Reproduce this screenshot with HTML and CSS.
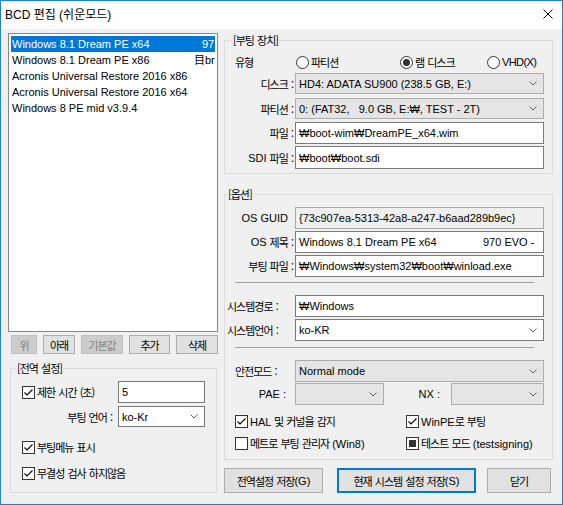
FILE: index.html
```html
<!DOCTYPE html>
<html lang="ko">
<head>
<meta charset="utf-8">
<title>BCD 편집 (쉬운모드)</title>
<link rel="stylesheet" href="styles.css">
</head>
<body>
<div class="window">
  <div class="titlebar">
    <span class="title">BCD <span class="kt">편집</span> (<span class="kt">쉬운모드</span>)</span>
    <span class="close"><svg width="10" height="10" viewBox="0 0 10 10"><path d="M0.5 0.5L9.5 9.5M9.5 0.5L0.5 9.5" stroke="#000" stroke-width="1" fill="none"/></svg></span>
  </div>
  <div class="client">
    <div class="left">
      <div class="listbox">
        <div class="item sel"><span class="c1">Windows 8.1 Dream PE x64</span>97</div>
        <div class="item"><span class="c1 c1-b">Windows 8.1 Dream PE x86</span>目br</div>
        <div class="item">Acronis Universal Restore 2016 x86</div>
        <div class="item">Acronis Universal Restore 2016 x64</div>
        <div class="item">Windows 8 PE mid v3.9.4</div>
      </div>
      <div class="btnrow">
        <button class="btn dis bw-up"><span class="k">위</span></button>
        <button class="btn bw-down"><span class="k">아래</span></button>
        <button class="btn dis bw-def"><span class="k">기본값</span></button>
        <button class="btn bw-add"><span class="k">추가</span></button>
        <button class="btn bw-del"><span class="k">삭제</span></button>
      </div>
      <fieldset class="group g-global">
        <legend class="k">[전역 설정]</legend>
        <div class="grow">
          <span class="check gcheck"><span class="cb"><svg width="11" height="11" viewBox="0 0 11 11"><path d="M1.5 5.5L4 8L9.5 2.5" fill="none" stroke="#000" stroke-width="1.1"/></svg></span><span class="k">제한 시간 (초)</span></span>
          <div class="field gfield h22">5</div>
        </div>
        <div class="grow2 mt3">
          <span class="glbl k">부팅 언어 :</span>
          <div class="field combo gfield h21"><span class="val">ko-Kr</span><svg class="arrow" width="8" height="5" viewBox="0 0 8 5"><path d="M0.5 0.5L4 4L7.5 0.5" fill="none" stroke="#606060"/></svg></div>
        </div>
        <div class="cbrow gpad mt12">
          <span class="check"><span class="cb"><svg width="11" height="11" viewBox="0 0 11 11"><path d="M1.5 5.5L4 8L9.5 2.5" fill="none" stroke="#000" stroke-width="1.1"/></svg></span><span class="k">부팅메뉴 표시</span></span>
        </div>
        <div class="cbrow gpad mt10">
          <span class="check"><span class="cb"><svg width="11" height="11" viewBox="0 0 11 11"><path d="M1.5 5.5L4 8L9.5 2.5" fill="none" stroke="#000" stroke-width="1.1"/></svg></span><span class="k">무결성 검사 하지않음</span></span>
        </div>
      </fieldset>
    </div>

    <div class="right">
      <fieldset class="group g-boot">
        <legend class="k">[부팅 장치]</legend>
        <div class="typerow">
          <span class="typelbl k">유형</span>
          <span class="radio r1"><span class="rb"></span><span class="k">파티션</span></span>
          <span class="radio r2"><span class="rb on"></span><span class="k">램 디스크</span></span>
          <span class="radio"><span class="rb"></span><span class="vhd">VHD(X)</span></span>
        </div>
        <div class="row h21 mt2">
          <span class="lbl k">디스크 :</span>
          <div class="field combo gray"><span class="val">HD4: ADATA SU900 (238.5 GB, E:)</span><svg class="arrow" width="8" height="5" viewBox="0 0 8 5"><path d="M0.5 0.5L4 4L7.5 0.5" fill="none" stroke="#606060"/></svg></div>
        </div>
        <div class="row h21 mt4">
          <span class="lbl k">파티션 :</span>
          <div class="field combo gray"><span class="val">0: (FAT32,   9.0 GB, E:₩, TEST - 2T)</span><svg class="arrow" width="8" height="5" viewBox="0 0 8 5"><path d="M0.5 0.5L4 4L7.5 0.5" fill="none" stroke="#606060"/></svg></div>
        </div>
        <div class="row h22 mt3">
          <span class="lbl k">파일 :</span>
          <div class="field">₩boot-wim₩DreamPE_x64.wim</div>
        </div>
        <div class="row h23 mt2">
          <span class="lbl">SDI <span class="k">파일 :</span></span>
          <div class="field">₩boot₩boot.sdi</div>
        </div>
      </fieldset>

      <fieldset class="group g-opt">
        <legend class="k">[옵션]</legend>
        <div class="row h22">
          <span class="lbl lbl-guid">OS GUID</span>
          <div class="field ro">{73c907ea-5313-42a8-a247-b6aad289b9ec}</div>
        </div>
        <div class="row h22 mt2">
          <span class="lbl">OS <span class="k">제목 :</span></span>
          <div class="field"><span class="tab">Windows 8.1 Dream PE x64</span><span class="rest">970 EVO -</span></div>
        </div>
        <div class="row h22 mt2">
          <span class="lbl k">부팅 파일 :</span>
          <div class="field">₩Windows₩system32₩boot₩winload.exe</div>
        </div>
        <div class="sep sep1"></div>
        <div class="row h22 mt12">
          <span class="lbl lbl-sys k">시스템경로 :</span>
          <div class="field">₩Windows</div>
        </div>
        <div class="row h22 mt2">
          <span class="lbl lbl-sys k">시스템언어 :</span>
          <div class="field combo"><span class="val">ko-KR</span><svg class="arrow" width="8" height="5" viewBox="0 0 8 5"><path d="M0.5 0.5L4 4L7.5 0.5" fill="none" stroke="#606060"/></svg></div>
        </div>
        <div class="sep sep2"></div>
        <div class="row h22 mt12">
          <span class="lbl lbl-safe k">안전모드 :</span>
          <div class="field combo gray"><span class="val">Normal mode</span><svg class="arrow" width="8" height="5" viewBox="0 0 8 5"><path d="M0.5 0.5L4 4L7.5 0.5" fill="none" stroke="#606060"/></svg></div>
        </div>
        <div class="row h22 mt1">
          <span class="lbl lbl-pae">PAE :</span>
          <div class="field combo gray f-pae"><span class="val"></span><svg class="arrow" width="8" height="5" viewBox="0 0 8 5"><path d="M0.5 0.5L4 4L7.5 0.5" fill="none" stroke="#606060"/></svg></div>
          <span class="lbl lbl-nx">NX :</span>
          <div class="field combo gray f-nx"><span class="val"></span><svg class="arrow" width="8" height="5" viewBox="0 0 8 5"><path d="M0.5 0.5L4 4L7.5 0.5" fill="none" stroke="#606060"/></svg></div>
        </div>
        <div class="cbrow opad mt8">
          <span class="check ocol"><span class="cb"><svg width="11" height="11" viewBox="0 0 11 11"><path d="M1.5 5.5L4 8L9.5 2.5" fill="none" stroke="#000" stroke-width="1.1"/></svg></span><span>HAL <span class="k">및 커널을 감지</span></span></span>
          <span class="check"><span class="cb"><svg width="11" height="11" viewBox="0 0 11 11"><path d="M1.5 5.5L4 8L9.5 2.5" fill="none" stroke="#000" stroke-width="1.1"/></svg></span><span>WinPE<span class="k">로 부팅</span></span></span>
        </div>
        <div class="cbrow opad mt6">
          <span class="check ocol"><span class="cb"></span><span><span class="k">메트로 부팅 관리자</span> (Win8)</span></span>
          <span class="check"><span class="cb mixed"></span><span><span class="k">테스트 모드</span> (testsigning)</span></span>
        </div>
      </fieldset>

      <div class="actions">
        <button class="btn act act-g"><span class="k">전역설정 저장</span>(G)</button>
        <button class="btn act act-s default"><span class="k">현재 시스템 설정 저장</span>(S)</button>
        <button class="btn act act-c"><span class="k">닫기</span></button>
      </div>
    </div>
  </div>
</div>
</body>
</html>
```

FILE: styles.css
```css
* { box-sizing: border-box; }
html, body { margin: 0; padding: 0; }
body {
  font-family: "Liberation Sans", "Noto Sans CJK KR", sans-serif;
  font-size: 11px;
  color: #000;
  background: #fff;
}
.k { font-family: "Noto Sans CJK KR", sans-serif; font-size: 11px; letter-spacing: -1px; word-spacing: 1px; }
.kt { font-family: "Noto Sans CJK KR", sans-serif; }

.window {
  width: 563px;
  height: 505px;
  border: 1px solid #1883d7;
  background: #f0f0f0;
  display: flex;
  flex-direction: column;
}
.titlebar {
  height: 28px;
  flex: none;
  background: #fff;
  display: flex;
  align-items: center;
  justify-content: space-between;
  padding: 0 9px 3px 4px;
}
.title { font-size: 12px; }
.close svg { display: block; }

.client { display: flex; gap: 6px; padding-left: 7px; }
.left { width: 210px; display: flex; flex-direction: column; }
.right { width: 329px; display: flex; flex-direction: column; }

/* list */
.listbox {
  margin-top: 4px;
  height: 299px;
  background: #fff;
  border: 1px solid #828790;
  padding: 2px;
  overflow: hidden;
}
.item { height: 16px; line-height: 16px; padding-left: 1px; white-space: nowrap; overflow: hidden; }
.item.sel { background: #0078d7; color: #fff; }
.c1 { display: inline-block; width: 190px; }
.c1-b { width: 182px; }

/* buttons */
.btnrow { display: flex; gap: 6px; margin-top: 3px; padding-left: 3px; }
.btn {
  height: 19px;
  border: 1px solid #adadad;
  background: #e1e1e1;
  font: inherit;
  color: #000;
  padding: 0;
  margin: 0;
  display: flex;
  align-items: center;
  justify-content: center;
  white-space: nowrap;
}
.btn.dis { background: #cccccc; border-color: #bfbfbf; color: #838383; }
.bw-up { width: 26px; }
.bw-down { width: 32px; }
.bw-def { width: 42px; }
.bw-add { width: 41px; }
.bw-del { width: 42px; }

/* group boxes */
.group {
  margin: 0;
  border: 1px solid #dcdcdc;
  padding: 5px 0 4px 0;
  min-width: 0;
}
.group legend { padding: 0 1px; line-height: 16px; }
.g-boot { margin-top: 3px; }
.g-boot legend { margin-left: 7px; }
.g-opt { margin-top: 12px; padding-bottom: 8px; }
.g-opt legend { margin-left: 2px; }
.g-global { margin: 6px 1px 0 2px; padding-bottom: 11px; }
.g-global legend { margin-left: 5px; }

.mt1 { margin-top: 1px; }
.mt2 { margin-top: 2px; }
.mt3 { margin-top: 3px; }
.mt4 { margin-top: 4px; }
.mt6 { margin-top: 6px; }
.mt8 { margin-top: 8px; }
.mt10 { margin-top: 10px; }
.mt12 { margin-top: 12px; }
.h21 { height: 21px; }
.h22 { height: 22px; }
.h23 { height: 23px; }

/* rows */
.typerow { display: flex; align-items: center; height: 18px; padding-left: 10px; }
.typelbl { width: 61px; }
.radio { display: flex; align-items: center; gap: 2px; }
.r1 { width: 104px; }
.r2 { width: 87px; }
.rb {
  width: 13px; height: 13px;
  border: 1px solid #333;
  border-radius: 50%;
  background: #fff;
  display: flex; align-items: center; justify-content: center;
  flex: none;
}
.rb.on::after { content: ""; width: 7px; height: 7px; border-radius: 50%; background: #333; }
.vhd { letter-spacing: -0.6px; }

.row { display: flex; }
.lbl {
  width: 70px;
  flex: none;
  display: flex;
  align-items: center;
  justify-content: flex-end;
  padding-right: 2px;
  white-space: pre;
}
.lbl-guid { padding-right: 7px; }
.lbl-sys { justify-content: flex-start; padding-left: 2px; }
.lbl-safe { justify-content: flex-start; padding-left: 10px; }
.lbl-pae { padding-right: 9px; }
.lbl-nx { width: 67px; padding-right: 11px; }

.field {
  width: 249px;
  height: 100%;
  flex: none;
  border: 1px solid #7a7a7a;
  background: #fff;
  display: flex;
  align-items: center;
  padding-left: 3px;
  overflow: hidden;
  white-space: pre;
}
.field.ro { background: #f0f0f0; border-color: #a8a8a8; }
.combo { justify-content: space-between; }
.combo.gray { background: #e5e5e5; border-color: #acacac; }
.val { white-space: pre; overflow: hidden; }
.arrow { flex: none; margin-right: 6px; display: block; }
.tab { flex: none; width: 184px; }
.rest { flex: none; }
.f-pae { width: 89px; }
.f-nx { width: 93px; }

.sep { height: 1px; background: #a0a0a0; margin-left: 10px; width: 299px; }
.sep1 { margin-top: 5px; }
.sep2 { margin-top: 6px; }

/* checkboxes */
.cbrow { display: flex; align-items: center; height: 16px; }
.opad { padding-left: 10px; }
.gpad { padding-left: 11px; }
.ocol { width: 171px; }
.check { display: flex; align-items: center; gap: 2px; white-space: nowrap; }
.cb {
  width: 13px; height: 13px;
  border: 1px solid #333;
  background: #fff;
  flex: none;
  display: flex; align-items: center; justify-content: center;
}
.cb svg { display: block; }
.cb.mixed::after { content: ""; width: 7px; height: 7px; background: #333; }

/* global settings group */
.grow { display: flex; align-items: center; height: 22px; padding-left: 11px; }
.gcheck { width: 96px; flex: none; }
.gfield { width: 87px; }
.grow2 { display: flex; align-items: center; height: 21px; }
.glbl { width: 107px; text-align: right; padding-right: 6px; flex: none; }

/* bottom actions */
.actions { display: flex; margin-top: 8px; }
.act { height: 25px; }
.act-g { width: 99px; }
.act-s { width: 139px; margin-left: 14px; }
.act-c { width: 64px; margin-left: 11px; }
.btn.default { border: 2px solid #0078d7; }
```
